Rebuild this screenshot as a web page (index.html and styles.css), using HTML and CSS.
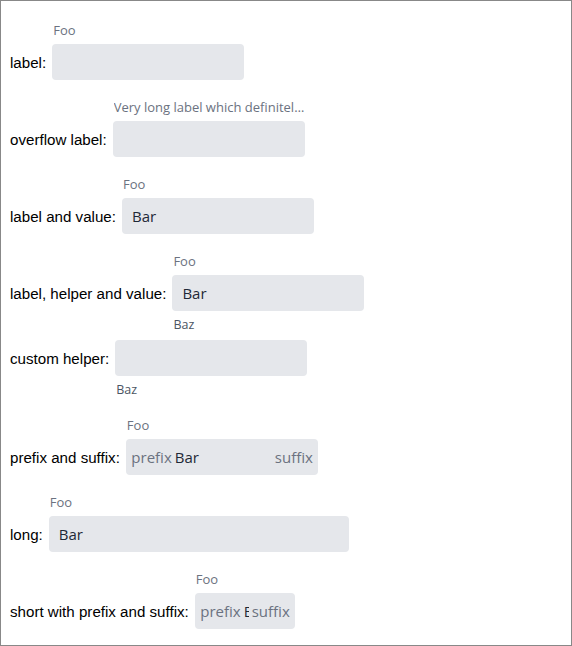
FILE: index.html
```html
<!DOCTYPE html>
<html>
<head>
<meta charset="utf-8">
<link rel="stylesheet" href="styles.css">
</head>
<body>
<div class="frame">
  <div class="row">
    <span class="caption">label:</span>
    <div class="top-label">Foo</div>
    <div class="box"></div>
  </div>
  <div class="row">
    <span class="caption">overflow label:</span>
    <div class="top-label">Very long label which definitely overflows the available width</div>
    <div class="box"></div>
  </div>
  <div class="row">
    <span class="caption">label and value:</span>
    <div class="top-label">Foo</div>
    <div class="box"><span class="value">Bar</span></div>
  </div>
  <div class="row">
    <span class="caption">label, helper and value:</span>
    <div class="top-label">Foo</div>
    <div class="box"><span class="value">Bar</span></div>
    <div class="helper">Baz</div>
  </div>
  <div class="row row-tight">
    <span class="caption">custom helper:</span>
    <div class="box"></div>
    <div class="helper">Baz</div>
  </div>
  <div class="row">
    <span class="caption">prefix and suffix:</span>
    <div class="top-label">Foo</div>
    <div class="box box-affix"><span class="affix">prefix</span><span class="value">Bar</span><span class="affix suffix">suffix</span></div>
  </div>
  <div class="row">
    <span class="caption">long:</span>
    <div class="top-label">Foo</div>
    <div class="box box-long"><span class="value">Bar</span></div>
  </div>
  <div class="row">
    <span class="caption">short with prefix and suffix:</span>
    <div class="top-label">Foo</div>
    <div class="box box-short box-affix"><span class="affix">prefix</span><span class="value">Bar</span><span class="affix suffix">suffix</span></div>
  </div>
</div>
</body>
</html>
```

FILE: styles.css
```css
html, body {
  margin: 0;
  padding: 0;
  background: #ffffff;
}

.frame {
  box-sizing: border-box;
  width: 572px;
  height: 646px;
  border: 1px solid #888888;
  padding: 21px 0 0 9px;
  display: flex;
  flex-direction: column;
  align-items: flex-start;
}

.row {
  display: grid;
  grid-template-columns: max-content max-content;
  grid-template-rows: auto 36px auto;
  column-gap: 6px;
}

.row + .row {
  margin-top: 19px;
}

.row.row-tight {
  margin-top: 7px;
}

.caption {
  grid-column: 1;
  grid-row: 2;
  align-self: center;
  font-family: "Liberation Sans", Arial, sans-serif;
  font-size: 15.13px;
  color: #000000;
}

.top-label {
  grid-column: 2;
  grid-row: 1;
  width: 192px;
  margin: 0 0 6px 1px;
  font-family: "Open Sans", sans-serif;
  font-size: 13px;
  line-height: 16px;
  color: #6b7280;
  white-space: nowrap;
  overflow: hidden;
  text-overflow: ellipsis;
}

.helper {
  grid-column: 2;
  grid-row: 3;
  margin: 6px 0 0 1px;
  font-family: "Open Sans", sans-serif;
  font-size: 12.5px;
  line-height: 16px;
  color: #4b5563;
}

.box {
  grid-column: 2;
  grid-row: 2;
  box-sizing: border-box;
  width: 192px;
  height: 36px;
  background: #e5e7eb;
  border-radius: 4px;
  padding: 0 10px;
  display: flex;
  align-items: center;
  overflow: hidden;
  font-family: "Open Sans", sans-serif;
  font-size: 15px;
  color: #1f2937;
}

.box-long {
  width: 300px;
}

.box-short {
  width: 100px;
}

.box-affix {
  padding: 0 5px 0 5.5px;
}

.value {
  flex: 1 1 auto;
  min-width: 0;
  overflow: hidden;
  white-space: nowrap;
}

.affix {
  flex: none;
  color: #6b7280;
  white-space: nowrap;
}

.affix:first-child {
  margin-right: 3px;
}

.suffix {
  margin-left: 3px;
}
```
